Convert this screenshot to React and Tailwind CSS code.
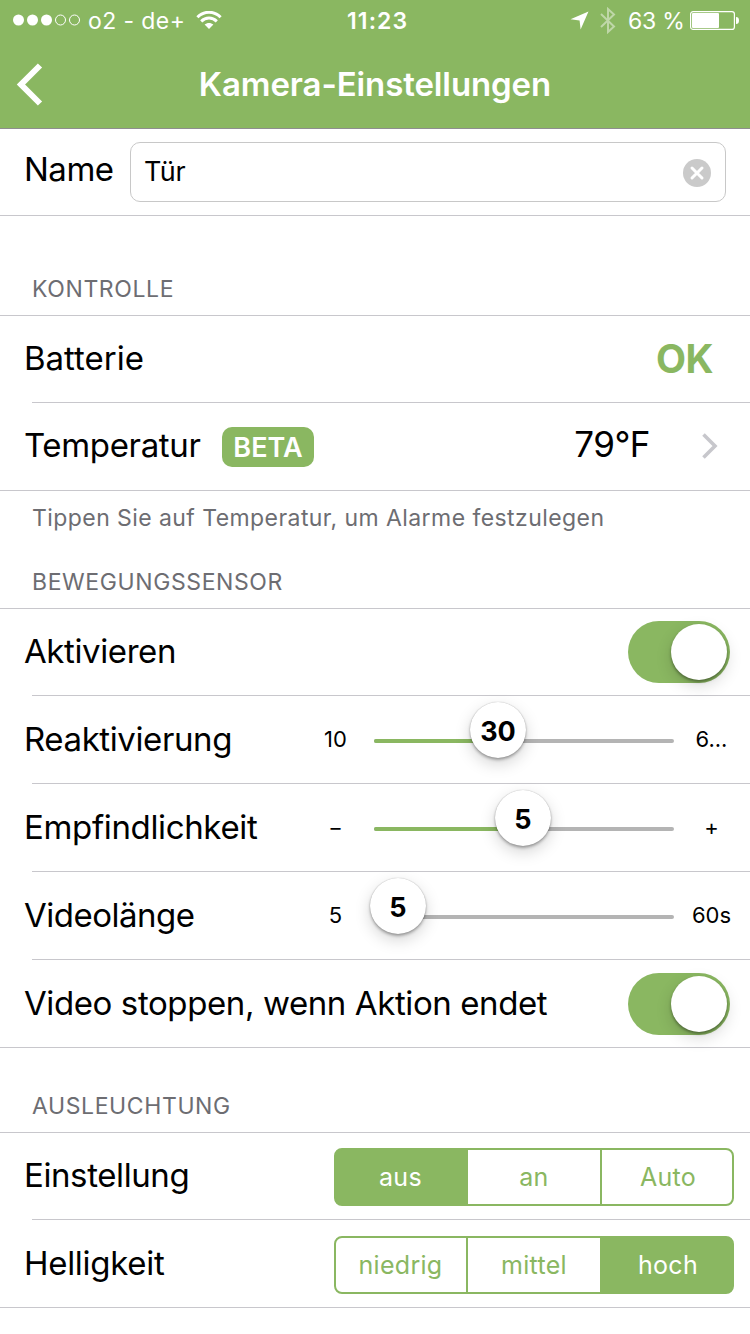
function StatusBar() {
  return (
    <div className="flex h-10 items-center pl-[13px] pr-[11px] text-[23px] leading-[40px]">
      <div className="flex w-[334px] items-center">
        <svg className="h-3 w-[67px] shrink-0" viewBox="0 0 67 12" fill="none">
          <circle cx="5.5" cy="6" r="5.5" fill="white" />
          <circle cx="19.5" cy="6" r="5.5" fill="white" />
          <circle cx="33.5" cy="6" r="5.5" fill="white" />
          <circle cx="47.5" cy="6" r="5" stroke="white" />
          <circle cx="61.5" cy="6" r="5" stroke="white" />
        </svg>
        <span className="ml-2 mt-[2px] w-[108px] whitespace-nowrap tracking-[0.4px]">o2 - de+</span>
        <svg className="h-[19px] w-[26px]" viewBox="0 0 26 19" fill="none" stroke="white">
          <path d="M1.4 6.2C8 -0.4 18 -0.4 24.6 6.2" strokeWidth="3" />
          <path d="M5.2 10.4C9.8 6 16.2 6 20.8 10.4" strokeWidth="3" />
          <path d="M13 18L8.6 13.6C11.2 11.4 14.8 11.4 17.4 13.6Z" fill="white" stroke="none" />
        </svg>
      </div>
      <span className="mt-[2px] whitespace-nowrap font-semibold tracking-[1.1px]">11:23</span>
      <div className="ml-auto flex items-center">
        <svg className="h-[19px] w-[19px]" viewBox="0 0 19 19">
          <path d="M18.5 0.5L0.5 8.2L9.6 9.4L10.6 18.5Z" fill="white" />
        </svg>
        <svg className="ml-[11px] h-[27px] w-4" viewBox="0 0 16 27" fill="none" stroke="white" strokeOpacity="0.45" strokeWidth="2">
          <path d="M1 7L14 19.5L8 25V2L14 7.5L1 20" />
        </svg>
        <span className="ml-3 mt-[2px] w-[62px] whitespace-nowrap tracking-[-0.2px]">63 %</span>
        <svg className="h-[19px] w-[49px]" viewBox="0 0 49 19" fill="none">
          <rect x="0.6" y="0.6" width="43.8" height="17.8" rx="2.5" stroke="white" strokeWidth="1.2" />
          <rect x="2" y="2" width="27" height="15" rx="1" fill="white" />
          <path d="M46 6C48 6 49 7 49 9.5C49 12 48 13 46 13Z" fill="white" />
        </svg>
      </div>
    </div>
  );
}

function SectionTitle({ className, children }) {
  return <h2 className={"pl-8 text-[23px] leading-7 tracking-[0.6px] text-[#6d6d72] " + className}>{children}</h2>;
}

function Divider({ inset }) {
  return <div className={inset ? "ml-8 h-px bg-[#c8c7cc]" : "h-px bg-[#c8c7cc]"} />;
}

function Row({ label, spacing, className, children }) {
  return (
    <div className={"flex items-center pl-6 " + className}>
      <span className={"whitespace-nowrap text-[33px] leading-10 " + spacing}>{label}</span>
      {children}
    </div>
  );
}

function Toggle() {
  return (
    <div className="ml-auto mr-5 flex h-[62px] w-[102px] items-center justify-end rounded-full bg-[#8ab761] pr-[3px]">
      <div className="size-14 rounded-full bg-white shadow-[0_6px_16px_rgba(0,0,0,0.15),0_2px_3px_rgba(0,0,0,0.35)]" />
    </div>
  );
}

function Slider({ min, max, value, offset }) {
  return (
    <div className="ml-auto flex items-center text-[22px] leading-7">
      <span className="w-[76px] pb-[2px] pr-px text-center">{min}</span>
      <div className="relative mt-[3px] h-1 w-[300px] rounded-full bg-[#b4b4b4]">
        <div className="h-1 rounded-full bg-[#8ab761]" style={{ width: offset }} />
        <div
          className="absolute -top-[37px] flex size-14 -translate-x-1/2 items-center justify-center rounded-full bg-white pt-1 text-[27px] font-bold shadow-[0_6px_16px_rgba(0,0,0,0.17),0_2px_3px_rgba(0,0,0,0.3),0_0_1px_rgba(0,0,0,0.3)]"
          style={{ left: offset }}
        >
          {value}
        </div>
      </div>
      <span className="w-[76px] pb-[2px] pr-px text-center">{max}</span>
    </div>
  );
}

function Segments({ items, active }) {
  return (
    <div className="ml-auto mr-4 mt-[2px] grid h-[58px] w-[400px] grid-cols-[134px_132px_134px] text-[25px] tracking-[0.3px]">
      {items.map((item, i) => (
        <div
          key={item}
          className={
            "flex items-center justify-center border-y-2 border-[#8ab761] pt-[2px] first:rounded-l-lg first:border-x-2 first:pr-px last:rounded-r-lg last:border-x-2 last:pl-[2px] " +
            (i === active ? "bg-[#8ab761] text-white" : "text-[#8ab761]")
          }
        >
          {item}
        </div>
      ))}
    </div>
  );
}

export default function App() {
  return (
    <div className="h-[1334px] w-[750px] overflow-hidden bg-white font-['Inter',sans-serif] text-black">
      <header className="h-[129px] border-b border-[#8e8e8e] bg-[#8ab761] text-white">
        <StatusBar />
        <div className="flex h-[88px] items-center">
          <svg className="ml-4 h-[43px] w-[27px]" viewBox="0 0 27 43" fill="none" stroke="white" strokeWidth="6">
            <path d="M24 2.5L5 21.5L24 40.5" />
          </svg>
          <h1 className="mr-[43px] mt-[2px] flex-1 whitespace-nowrap text-center text-[33px] font-semibold tracking-[-0.1px]">Kamera-Einstellungen</h1>
        </div>
      </header>

      <Row label="Name" spacing="w-[106px] pb-[6px] tracking-[-0.5px]" className="h-[86px]">
        <div className="flex h-[60px] w-[596px] items-center justify-between rounded-[10px] border border-[#c8c8c8] pl-[13px] pr-[14px]">
          <span className="text-[27px] tracking-[-0.3px]">Tür</span>
          <svg className="mt-[2px] size-7" viewBox="0 0 28 28">
            <circle cx="14" cy="14" r="14" fill="#cacaca" />
            <path d="M9 9L19 19M19 9L9 19" stroke="white" strokeWidth="3" strokeLinecap="round" />
          </svg>
        </div>
      </Row>
      <Divider />

      <SectionTitle className="mt-[59px] mb-[12px] h-7">KONTROLLE</SectionTitle>
      <Divider />
      <Row label="Batterie" spacing="pb-[2px]" className="h-[86px]">
        <span className="ml-auto mr-[37px] text-[39px] font-bold tracking-[-0.5px] text-[#8ab761]">OK</span>
      </Row>
      <Divider inset />
      <Row label="Temperatur" spacing="w-[198px] pb-[4px] tracking-[-0.35px]" className="h-[87px]">
        <span className="flex h-10 w-[92px] items-center justify-center rounded-[10px] bg-[#8ab761] pt-[3px] text-[27px] font-semibold text-white">BETA</span>
        <span className="ml-auto pb-[4px] text-[35px] tracking-[-0.5px]">79°F</span>
        <svg className="ml-[52px] mr-[32px] mb-[2px] h-[26px] w-4" viewBox="0 0 16 26" fill="none" stroke="#c7c7cc" strokeWidth="3.6">
          <path d="M1.5 1.5L13 13L1.5 24.5" />
        </svg>
      </Row>
      <Divider />

      <p className="mt-[13px] h-7 whitespace-nowrap pl-8 text-[23px] leading-7 tracking-[0.43px] text-[#6d6d72]">Tippen Sie auf Temperatur, um Alarme festzulegen</p>
      <SectionTitle className="mt-9 mb-[12px] h-7">BEWEGUNGSSENSOR</SectionTitle>
      <Divider />
      <Row label="Aktivieren" spacing="pb-[2px] tracking-[-0.4px]" className="h-[86px]">
        <Toggle />
      </Row>
      <Divider inset />
      <Row label="Reaktivierung" spacing="pb-[2px] tracking-[-0.4px]" className="h-[87px]">
        <Slider min="10" max="6..." value="30" offset={124} />
      </Row>
      <Divider inset />
      <Row label="Empfindlichkeit" spacing="pb-[2px] tracking-[-0.35px]" className="h-[87px]">
        <Slider min="−" max="+" value="5" offset={149} />
      </Row>
      <Divider inset />
      <Row label="Videolänge" spacing="pb-[2px] tracking-[-0.5px]" className="h-[87px]">
        <Slider min="5" max="60s" value="5" offset={24} />
      </Row>
      <Divider inset />
      <Row label="Video stoppen, wenn Aktion endet" spacing="pb-[2px] tracking-[-0.4px]" className="h-[87px]">
        <Toggle />
      </Row>
      <Divider />

      <SectionTitle className="mt-[44px] mb-[12px] h-7">AUSLEUCHTUNG</SectionTitle>
      <Divider />
      <Row label="Einstellung" spacing="pb-[2px] tracking-[-0.4px]" className="h-[86px]">
        <Segments items={["aus", "an", "Auto"]} active={0} />
      </Row>
      <Divider inset />
      <Row label="Helligkeit" spacing="pb-[2px] tracking-[-0.3px]" className="h-[87px]">
        <Segments items={["niedrig", "mittel", "hoch"]} active={2} />
      </Row>
      <Divider />
    </div>
  );
}
